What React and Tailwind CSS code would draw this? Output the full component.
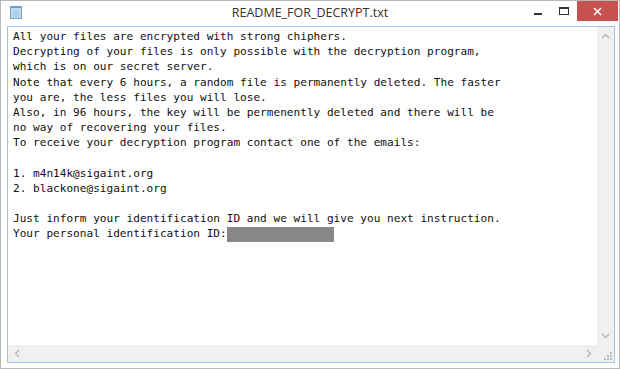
import React from 'react';

const lines = [
  'All your files are encrypted with strong chiphers.',
  'Decrypting of your files is only possible with the decryption program,',
  'which is on our secret server.',
  'Note that every 6 hours, a random file is permanently deleted. The faster',
  'you are, the less files you will lose.',
  'Also, in 96 hours, the key will be permenently deleted and there will be',
  'no way of recovering your files.',
  'To receive your decryption program contact one of the emails:',
  '',
  '1. m4n14k@sigaint.org',
  '2. blackone@sigaint.org',
  '',
  'Just inform your identification ID and we will give you next instruction.',
];

const NotepadIcon = () => (
  <svg width="14" height="14" viewBox="0 0 14 14">
    <rect x="1.5" y="1.5" width="11" height="12" fill="#bcd9f0" stroke="#7aa6cc" />
    <rect x="2" y="1" width="10" height="2" fill="#6f9fc9" />
    <line x1="4" y1="6" x2="10" y2="6" stroke="#9cc1e2" />
    <line x1="4" y1="8.5" x2="10" y2="8.5" stroke="#9cc1e2" />
    <line x1="4" y1="11" x2="10" y2="11" stroke="#9cc1e2" />
  </svg>
);

const Chevron = ({ d }) => (
  <svg width="9" height="9" viewBox="0 0 9 9" fill="none" stroke="#b4b4b4" strokeWidth="1.3">
    <polyline points={d} />
  </svg>
);

export default function App() {
  return (
    <div className="w-[620px] h-[369px] bg-white border border-[#b9b9b9] flex flex-col overflow-hidden" style={{ fontFamily: '"Open Sans", "Noto Sans", sans-serif' }}>
      {/* title bar */}
      <div className="h-[25px] flex items-start relative shrink-0">
        <div className="pl-[8px] pt-[4px]"><NotepadIcon /></div>
        <div className="absolute left-0 right-0 top-[3px] text-center text-[12.5px] text-[#333]">README_FOR_DECRYPT.txt</div>
        <div className="ml-auto flex items-start">
          <div className="w-[26px] h-[20px] flex items-center justify-center">
            <div className="w-[8px] h-[2px] bg-[#333] mt-[5px]" />
          </div>
          <div className="w-[26px] h-[20px] flex items-center justify-center">
            <div className="w-[10px] h-[8px] border border-[#333] border-t-2" />
          </div>
          <div className="w-[41px] h-[20px] bg-[#c75050] flex items-center justify-center mr-[1px]">
            <svg width="9" height="9" viewBox="0 0 9 9" stroke="white" strokeWidth="1.6"><line x1="1" y1="1" x2="8" y2="8" /><line x1="8" y1="1" x2="1" y2="8" /></svg>
          </div>
        </div>
      </div>
      {/* edit area */}
      <div className="ml-[6px] mr-[4px] h-[337px] border border-[#a5c3e6] flex flex-col">
        <div className="flex flex-1 min-h-0">
          <div className="flex-1 pl-[5px] pt-[2px] text-[11.1px] leading-[15.2px] text-[#111] whitespace-pre" style={{ fontFamily: '"DejaVu Sans Mono", "Liberation Mono", monospace' }}>
            {lines.map((l, i) => (
              <div key={i} className="h-[15.2px]">{l}</div>
            ))}
            <div className="h-[15.2px] flex items-center">
              <span>Your personal identification ID:</span>
              <span className="inline-block w-[107px] h-[15px] bg-[#888888]" />
            </div>
          </div>
          <div className="w-[17px] bg-[#f0f0f0] flex flex-col items-center justify-between py-[5px]">
            <Chevron d="1,6 4.5,2.5 8,6" />
            <Chevron d="1,3 4.5,6.5 8,3" />
          </div>
        </div>
        <div className="h-[17px] flex bg-[#f0f0f0]">
          <div className="flex-1 flex items-center justify-between pl-[5px] pr-[4px]">
            <Chevron d="6,1 2.5,4.5 6,8" />
            <Chevron d="3,1 6.5,4.5 3,8" />
          </div>
          <div className="w-[17px] flex items-end justify-end p-[2px]">
            <svg width="8" height="8" viewBox="0 0 8 8" fill="#bcbcbc">
              <rect x="6" y="0" width="2" height="2" /><rect x="3" y="3" width="2" height="2" /><rect x="6" y="3" width="2" height="2" />
              <rect x="0" y="6" width="2" height="2" /><rect x="3" y="6" width="2" height="2" /><rect x="6" y="6" width="2" height="2" />
            </svg>
          </div>
        </div>
      </div>
    </div>
  );
}
